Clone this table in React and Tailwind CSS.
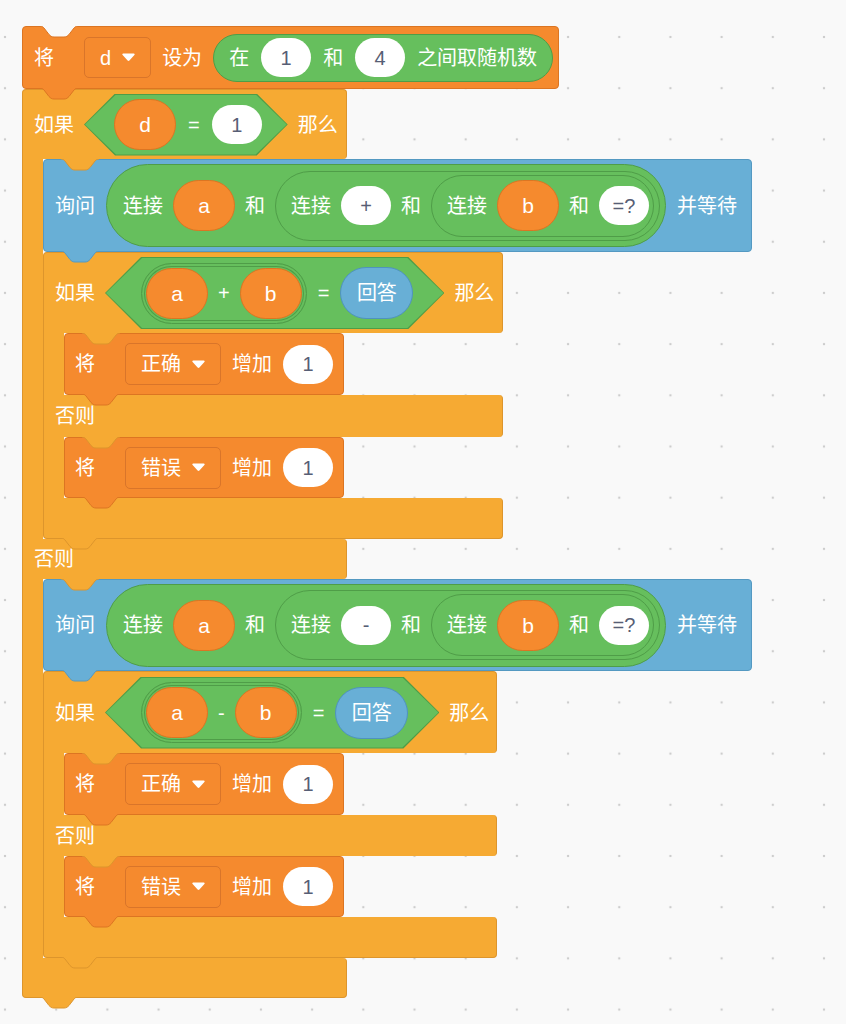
import React from "react";

const TAB_D =
  "M0 0 C2 0 3 1 4 2 L9 8.5 C10.5 10 11.5 11 14 11 H24 C26.5 11 27.5 10 29 8.5 L34 2 C35 1 36 0 38 0";

function Tab({ fill, stroke, pos }) {
  return (
    <svg
      className={`pointer-events-none absolute z-10 ${pos}`}
      width="38"
      height="12"
      viewBox="0 0 38 12"
      fill="none"
    >
      <path d={TAB_D + " Z"} fill={fill} />
      <path d={TAB_D} stroke={stroke} strokeWidth="1" fill="none" />
    </svg>
  );
}

function L({ children, className = "" }) {
  return (
    <span className={`shrink-0 whitespace-nowrap text-[20px] leading-none text-white ${className}`}>
      {children}
    </span>
  );
}

function Num({ v }) {
  return (
    <span className="flex h-[39px] w-[50px] shrink-0 items-center justify-center rounded-full bg-white text-[20px] leading-none text-[#575e75]">
      {v}
    </span>
  );
}

function Var({ v }) {
  return (
    <span className="flex h-[51px] w-[62px] shrink-0 items-center justify-center rounded-full border border-[#dc7522] bg-[#f58a2e] text-[21px] leading-none text-white">
      {v}
    </span>
  );
}

function Answer() {
  return (
    <span className="flex h-[52px] w-[73px] shrink-0 items-center justify-center rounded-full border border-[#4f93bf] bg-[#68afd6] text-[20px] leading-none text-white">
      回答
    </span>
  );
}

function Caret() {
  return (
    <svg width="13" height="9" viewBox="0 0 13 9" className="shrink-0">
      <path
        d="M1.2 0.5 H11.8 C12.6 0.5 13 1.4 12.4 2 L7.4 7.6 C6.9 8.1 6.1 8.1 5.6 7.6 L0.6 2 C0 1.4 0.4 0.5 1.2 0.5 Z"
        fill="#fff"
      />
    </svg>
  );
}

function Dropdown({ text, h }) {
  return (
    <span
      className={`flex ${h} shrink-0 items-center gap-[11px] rounded-[5px] border border-[#d9752a] bg-[#f58a2e] px-[15px]`}
    >
      <L>{text}</L>
      <Caret />
    </span>
  );
}

function Rep({ h, pad, children }) {
  return (
    <div
      className={`flex ${h} shrink-0 items-center gap-[10px] rounded-full border border-[#4f9d48] bg-[#66bf5d] ${pad}`}
    >
      {children}
    </div>
  );
}

const HEX62 =
  "[clip-path:polygon(31px_0,calc(100%_-_31px)_0,100%_50%,calc(100%_-_31px)_100%,31px_100%,0_50%)]";
const HEX72 =
  "[clip-path:polygon(36px_0,calc(100%_-_36px)_0,100%_50%,calc(100%_-_36px)_100%,36px_100%,0_50%)]";

function Hex({ big, children }) {
  const clip = big ? HEX72 : HEX62;
  return (
    <div
      className={`relative flex shrink-0 items-center ${
        big ? "h-[72px] pl-[36px] pr-[31px]" : "h-[62px] pl-[30px] pr-[26px]"
      }`}
    >
      <div className={`absolute inset-0 bg-[#4f9d48] ${clip}`} />
      <div className={`absolute inset-[1px] bg-[#66bf5d] ${clip}`} />
      <div className={`relative flex items-center ${big ? "gap-[11px]" : "gap-[12px]"}`}>
        {children}
      </div>
    </div>
  );
}

function SetBlock() {
  return (
    <div className="relative flex h-[63px] w-[537px] items-center gap-[11px] rounded-[4px] border border-[#dc7522] bg-[#f58a2e] pl-[11px]">
      <Tab fill="#f9f9f9" stroke="#dc7522" pos="-top-px left-[17px]" />
      <Tab fill="#f58a2e" stroke="#dc7522" pos="top-full left-[17px]" />
      <L className="mr-[19px]">将</L>
      <Dropdown text="d" h="h-[41px]" />
      <L>设为</L>
      <Rep h="h-[48px]" pad="px-[15px] gap-[12px]">
        <L>在</L>
        <Num v="1" />
        <L>和</L>
        <Num v="4" />
        <L>之间取随机数</L>
      </Rep>
    </div>
  );
}

function ChangeBlock({ field, h }) {
  return (
    <div
      className={`relative flex ${h} w-[280px] items-center gap-[11px] rounded-[4px] border border-[#dc7522] bg-[#f58a2e] pl-[10px]`}
    >
      <Tab fill="#f58a2e" stroke="#dc7522" pos="top-full left-[17px]" />
      <L className="mr-[19px]">将</L>
      <Dropdown text={field} h="h-[42px]" />
      <L>增加</L>
      <Num v="1" />
    </div>
  );
}

function AskBlock({ op, h }) {
  return (
    <div
      className={`relative flex ${h} w-[709px] items-center gap-[11px] rounded-[4px] border border-[#5499c2] bg-[#68afd6] pl-[11px]`}
    >
      <Tab fill="#68afd6" stroke="#5499c2" pos="top-full left-[17px]" />
      <L>询问</L>
      <Rep h="h-[83px]" pad="pl-[16px] pr-[5px]">
        <L>连接</L>
        <Var v="a" />
        <L>和</L>
        <Rep h="h-[70px]" pad="pl-[15px] pr-[5px]">
          <L>连接</L>
          <Num v={op} />
          <L>和</L>
          <Rep h="h-[62px]" pad="pl-[15px] pr-[4px]">
            <L>连接</L>
            <Var v="b" />
            <L>和</L>
            <Num v="=?" />
          </Rep>
        </Rep>
      </Rep>
      <L>并等待</L>
    </div>
  );
}

function Compare({ op }) {
  return (
    <Hex big>
      <div className="flex h-[61px] shrink-0 items-center gap-[10px] rounded-full border border-[#4f9d48] bg-[#66bf5d] px-[4px] shadow-[inset_0_0_0_2px_#66bf5d,inset_0_0_0_3px_#4f9d48]">
        <Var v="a" />
        <L>{op}</L>
        <Var v="b" />
      </div>
      <L>=</L>
      <Answer />
    </Hex>
  );
}

const Y = "#f6aa33";
const YS = "#dd952c";

function Wall() {
  return <div className="w-[21px] shrink-0 border-l border-[#dd952c] bg-[#f6aa33]" />;
}

function CBlock({ w, topH, top, a, elseH, b, bottomH }) {
  return (
    <div className="flex flex-col items-start">
      <div
        className={`relative flex ${w} ${topH} items-center gap-[10px] rounded-t-[4px] rounded-br-[4px] border-x border-t border-[#dd952c] bg-[#f6aa33] pl-[11px]`}
      >
        <Tab fill={Y} stroke={YS} pos="top-full left-[38px]" />
        {top}
      </div>
      <div className="flex">
        <Wall />
        <div className="flex flex-col items-start">{a}</div>
      </div>
      <div
        className={`relative flex ${w} ${elseH} items-center rounded-r-[4px] border-x border-[#dd952c] bg-[#f6aa33] pl-[11px]`}
      >
        <Tab fill={Y} stroke={YS} pos="top-full left-[38px]" />
        <L>否则</L>
      </div>
      <div className="flex">
        <Wall />
        <div className="flex flex-col items-start">{b}</div>
      </div>
      <div
        className={`relative ${w} ${bottomH} rounded-b-[4px] rounded-tr-[4px] border-x border-b border-[#dd952c] bg-[#f6aa33]`}
      >
        <Tab fill={Y} stroke={YS} pos="top-full left-[17px]" />
      </div>
    </div>
  );
}

function Branch({ op, askH, w, topH, elseH }) {
  return (
    <>
      <AskBlock op={op} h={askH} />
      <CBlock
        w={w}
        topH={topH}
        top={
          <>
            <L>如果</L>
            <Compare op={op} />
            <L>那么</L>
          </>
        }
        a={<ChangeBlock field="正确" h="h-[62px]" />}
        elseH={elseH}
        b={<ChangeBlock field="错误" h="h-[61px]" />}
        bottomH="h-[41px]"
      />
    </>
  );
}

export default function App() {
  return (
    <div className="h-[1024px] w-full overflow-hidden bg-[#f9f9f9] bg-[image:radial-gradient(circle,#cdcdcd_1px,transparent_1.6px)] bg-[size:51.2px_51.2px] bg-[position:-20.6px_11.4px] pl-[22px] pt-[26px] [font-family:'Liberation_Sans','Noto_Sans_CJK_SC',sans-serif]">
      <div className="flex flex-col items-start">
        <SetBlock />
        <CBlock
          w="w-[325px]"
          topH="h-[70px]"
          top={
            <>
              <L>如果</L>
              <Hex>
                <Var v="d" />
                <L>=</L>
                <Num v="1" />
              </Hex>
              <L>那么</L>
            </>
          }
          a={<Branch op="+" askH="h-[93px]" w="w-[460px]" topH="h-[81px]" elseH="h-[42px]" />}
          elseH="h-[40px]"
          b={<Branch op="-" askH="h-[92px]" w="w-[454px]" topH="h-[82px]" elseH="h-[41px]" />}
          bottomH="h-[40px]"
        />
      </div>
    </div>
  );
}
